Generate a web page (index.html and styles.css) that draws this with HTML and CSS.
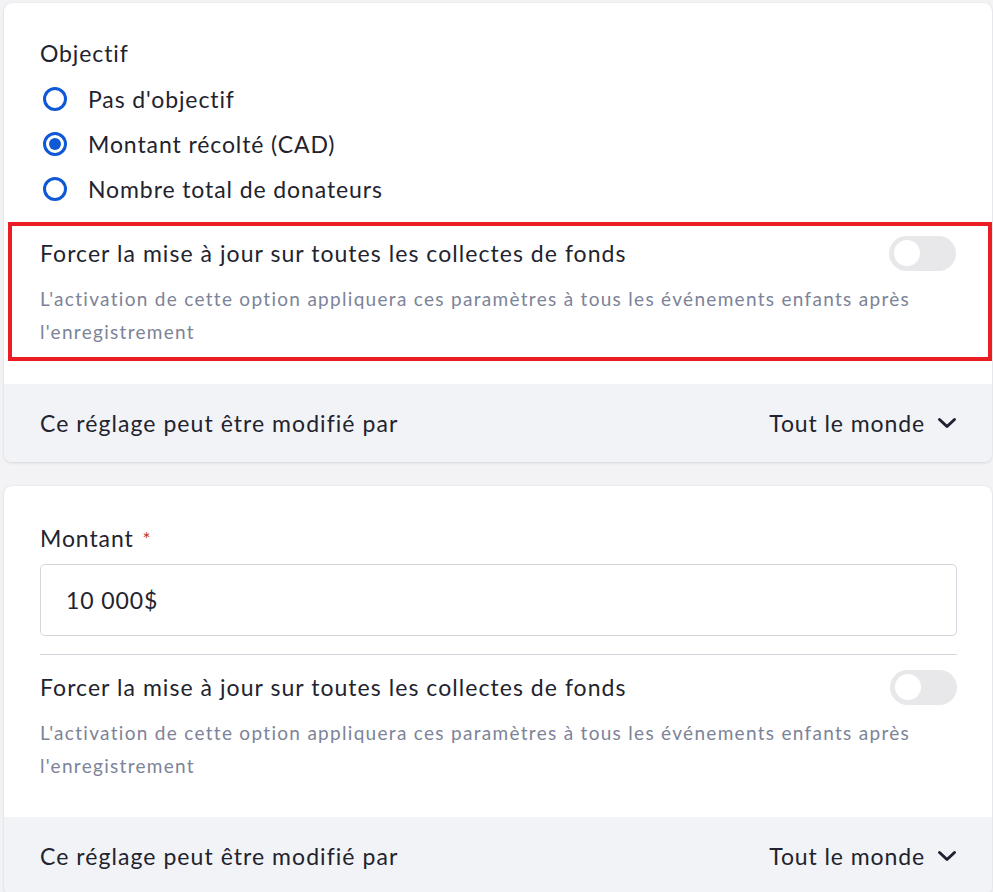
FILE: index.html
```html
<!DOCTYPE html>
<html lang="fr">
<head>
<meta charset="utf-8">
<title>Objectif</title>
<link rel="stylesheet" href="styles.css">
</head>
<body>
<div class="page">
  <section class="card card-top">
    <div class="body">
      <div class="label">Objectif</div>
      <div class="radios">
        <label class="radio"><span class="circle"></span><span>Pas d'objectif</span></label>
        <label class="radio"><span class="circle checked"></span><span>Montant récolté (CAD)</span></label>
        <label class="radio"><span class="circle"></span><span>Nombre total de donateurs</span></label>
      </div>
    </div>
    <div class="force highlighted">
      <div class="force-row">
        <span class="force-title">Forcer la mise à jour sur toutes les collectes de fonds</span>
        <span class="toggle"><span class="knob"></span></span>
      </div>
      <p class="desc">L'activation de cette option appliquera ces paramètres à tous les événements enfants après l'enregistrement</p>
    </div>
    <div class="footer">
      <span>Ce réglage peut être modifié par</span>
      <span class="select">Tout le monde
        <svg class="chev" width="20" height="14" viewBox="0 0 20 14"><path d="M2.5 3.5 L10 10.5 L17.5 3.5" fill="none" stroke="#1f2230" stroke-width="3" stroke-linecap="round" stroke-linejoin="round"/></svg>
      </span>
    </div>
  </section>

  <section class="card card-second">
    <div class="body body2">
      <div class="label">Montant <span class="req">*</span></div>
      <div class="input">10 000$</div>
      <hr class="divider">
      <div class="force-row">
        <span class="force-title">Forcer la mise à jour sur toutes les collectes de fonds</span>
        <span class="toggle"><span class="knob"></span></span>
      </div>
      <p class="desc">L'activation de cette option appliquera ces paramètres à tous les événements enfants après l'enregistrement</p>
    </div>
    <div class="footer">
      <span>Ce réglage peut être modifié par</span>
      <span class="select">Tout le monde
        <svg class="chev" width="20" height="14" viewBox="0 0 20 14"><path d="M2.5 3.5 L10 10.5 L17.5 3.5" fill="none" stroke="#1f2230" stroke-width="3" stroke-linecap="round" stroke-linejoin="round"/></svg>
      </span>
    </div>
  </section>
</div>
</body>
</html>
```

FILE: styles.css
```css
* { box-sizing: border-box; }
html, body { margin: 0; padding: 0; }
body {
  background: #f3f3f6;
  font-family: Lato, "Noto Sans", sans-serif;
  color: #22232e;
  overflow: hidden;
}
.page {
  padding: 3px 1px 0 4px;
  display: flex;
  flex-direction: column;
  gap: 24px;
}
.card {
  background: #fff;
  border-radius: 8px;
  box-shadow: 0 1px 3px rgba(20, 24, 50, 0.12), 0 0 1px rgba(20, 24, 50, 0.1);
  overflow: hidden;
}
.body {
  padding: 35px 35px 0 36px;
}
.label, .radio, .force-title, .footer, .input {
  font-size: 23px;
  letter-spacing: 0.9px;
}
.force-title, .footer > span:first-child { letter-spacing: 1.05px; }
.label {
  line-height: 30px;
  margin-bottom: 8px;
}
.req { color: #c0392b; font-size: 19px; vertical-align: top; margin-left: 2px; position: relative; top: 1px; }
.radios { display: flex; flex-direction: column; }
.radio {
  height: 45px;
  display: flex;
  align-items: center;
  gap: 21px;
}
.circle {
  width: 24px;
  height: 24px;
  border: 3px solid #0f59d6;
  border-radius: 50%;
  margin-left: 3px;
  display: flex;
  align-items: center;
  justify-content: center;
}
.circle.checked::after {
  content: "";
  width: 12px;
  height: 12px;
  border-radius: 50%;
  background: #0f59d6;
}
.force {
  margin: 11px 0 0 4px;
  padding: 12px 32px 9px 28px;
}
.highlighted {
  border: 4px solid #ea1c24;
}
.force-row {
  display: flex;
  justify-content: space-between;
  align-items: center;
  height: 30px;
}
.force-title {
  line-height: 30px;
}
.toggle {
  width: 67px;
  height: 35px;
  border-radius: 18px;
  background: #e8e8eb;
  display: flex;
  align-items: center;
  padding-left: 5px;
  flex-shrink: 0;
}
.knob {
  width: 26px;
  height: 26px;
  border-radius: 50%;
  background: #fff;
}
.desc {
  margin: 14px 0 0;
  font-size: 19px;
  line-height: 33px;
  color: #7d8398;
  letter-spacing: 1.3px;
}
.footer {
  margin-top: 23px;
  height: 78px;
  background: #f2f3f7;
  padding: 0 35px 0 36px;
  display: flex;
  justify-content: space-between;
  align-items: center;
}
.select {
  display: flex;
  align-items: center;
  gap: 12px;
}
.body2 { padding-top: 37px; padding-bottom: 0; }
.body2 .label { margin-bottom: 11px; }
.input {
  height: 72px;
  border: 1px solid #d3d6dc;
  border-radius: 5px;
  padding-left: 25px;
  display: flex;
  align-items: center;
}
.divider {
  border: 0;
  border-top: 1px solid #d3d6dc;
  margin: 18px 0 17px;
}
.card-second .desc { margin-bottom: 0; }
.card-second .footer { margin-top: 35px; }
```
